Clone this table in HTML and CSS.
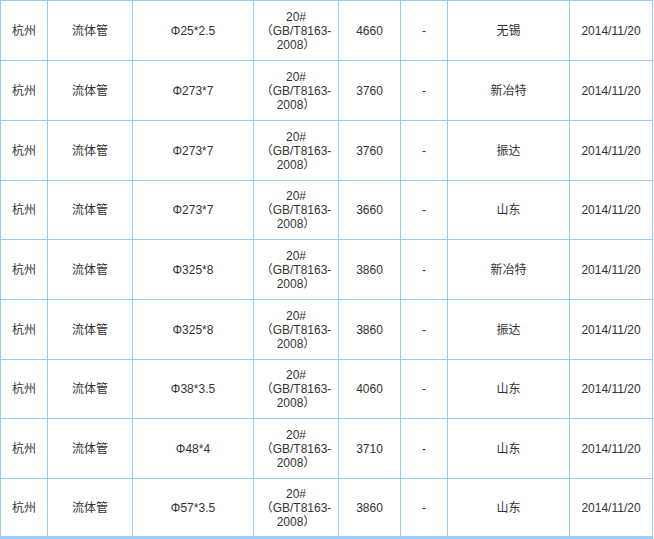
FILE: index.html
```html
<!DOCTYPE html>
<html lang="zh-CN">
<head>
<meta charset="utf-8">
<title>流体管价格</title>
<link rel="stylesheet" href="styles.css">
</head>
<body>
<table class="price-table">
  <colgroup>
    <col class="c1"><col class="c2"><col class="c3"><col class="c4"><col class="c5"><col class="c6"><col class="c7"><col class="c8">
  </colgroup>
  <tbody>
    <tr class="r60"><td>杭州</td><td>流体管</td><td>Φ25*2.5</td><td class="mat">20#<br>（GB/T8163-<br>2008）</td><td>4660</td><td>-</td><td>无锡</td><td>2014/11/20</td></tr>
    <tr class="r60"><td>杭州</td><td>流体管</td><td>Φ273*7</td><td class="mat">20#<br>（GB/T8163-<br>2008）</td><td>3760</td><td>-</td><td>新冶特</td><td>2014/11/20</td></tr>
    <tr class="r60"><td>杭州</td><td>流体管</td><td>Φ273*7</td><td class="mat">20#<br>（GB/T8163-<br>2008）</td><td>3760</td><td>-</td><td>振达</td><td>2014/11/20</td></tr>
    <tr class="r59"><td>杭州</td><td>流体管</td><td>Φ273*7</td><td class="mat">20#<br>（GB/T8163-<br>2008）</td><td>3660</td><td>-</td><td>山东</td><td>2014/11/20</td></tr>
    <tr class="r60"><td>杭州</td><td>流体管</td><td>Φ325*8</td><td class="mat">20#<br>（GB/T8163-<br>2008）</td><td>3860</td><td>-</td><td>新冶特</td><td>2014/11/20</td></tr>
    <tr class="r60"><td>杭州</td><td>流体管</td><td>Φ325*8</td><td class="mat">20#<br>（GB/T8163-<br>2008）</td><td>3860</td><td>-</td><td>振达</td><td>2014/11/20</td></tr>
    <tr class="r59"><td>杭州</td><td>流体管</td><td>Φ38*3.5</td><td class="mat">20#<br>（GB/T8163-<br>2008）</td><td>4060</td><td>-</td><td>山东</td><td>2014/11/20</td></tr>
    <tr class="r60"><td>杭州</td><td>流体管</td><td>Φ48*4</td><td class="mat">20#<br>（GB/T8163-<br>2008）</td><td>3710</td><td>-</td><td>山东</td><td>2014/11/20</td></tr>
    <tr class="r60 last"><td>杭州</td><td>流体管</td><td>Φ57*3.5</td><td class="mat">20#<br>（GB/T8163-<br>2008）</td><td>3860</td><td>-</td><td>山东</td><td>2014/11/20</td></tr>
  </tbody>
</table>
</body>
</html>
```
FILE: styles.css
```css
html, body {
  margin: 0;
  padding: 0;
  background: #ffffff;
}

.price-table {
  border-collapse: separate;
  border-spacing: 0;
  table-layout: fixed;
  width: 653px;
  border-top: 1px solid #99ccff;
  border-left: 1px solid #99ccff;
  font-family: "Liberation Sans", "Noto Sans CJK SC", sans-serif;
  font-size: 12px;
  color: #333333;
  text-spacing-trim: space-all;
}

.c1 { width: 47px; }
.c2 { width: 85px; }
.c3 { width: 121px; }
.c4 { width: 85px; }
.c5 { width: 62px; }
.c6 { width: 47px; }
.c7 { width: 122px; }
.c8 { width: 83px; }

.price-table td {
  box-sizing: border-box;
  padding: 0;
  border-right: 1px solid #99ccff;
  border-bottom: 1px solid #99ccff;
  text-align: center;
  vertical-align: middle;
  line-height: 14px;
  white-space: nowrap;
  overflow: hidden;
}

.r60 td { height: 60px; }
.r59 td { height: 59px; }

.last td {
  border-bottom-width: 3px;
}

.mat {
  line-height: 14px;
  text-spacing-trim: space-all;
}
```
